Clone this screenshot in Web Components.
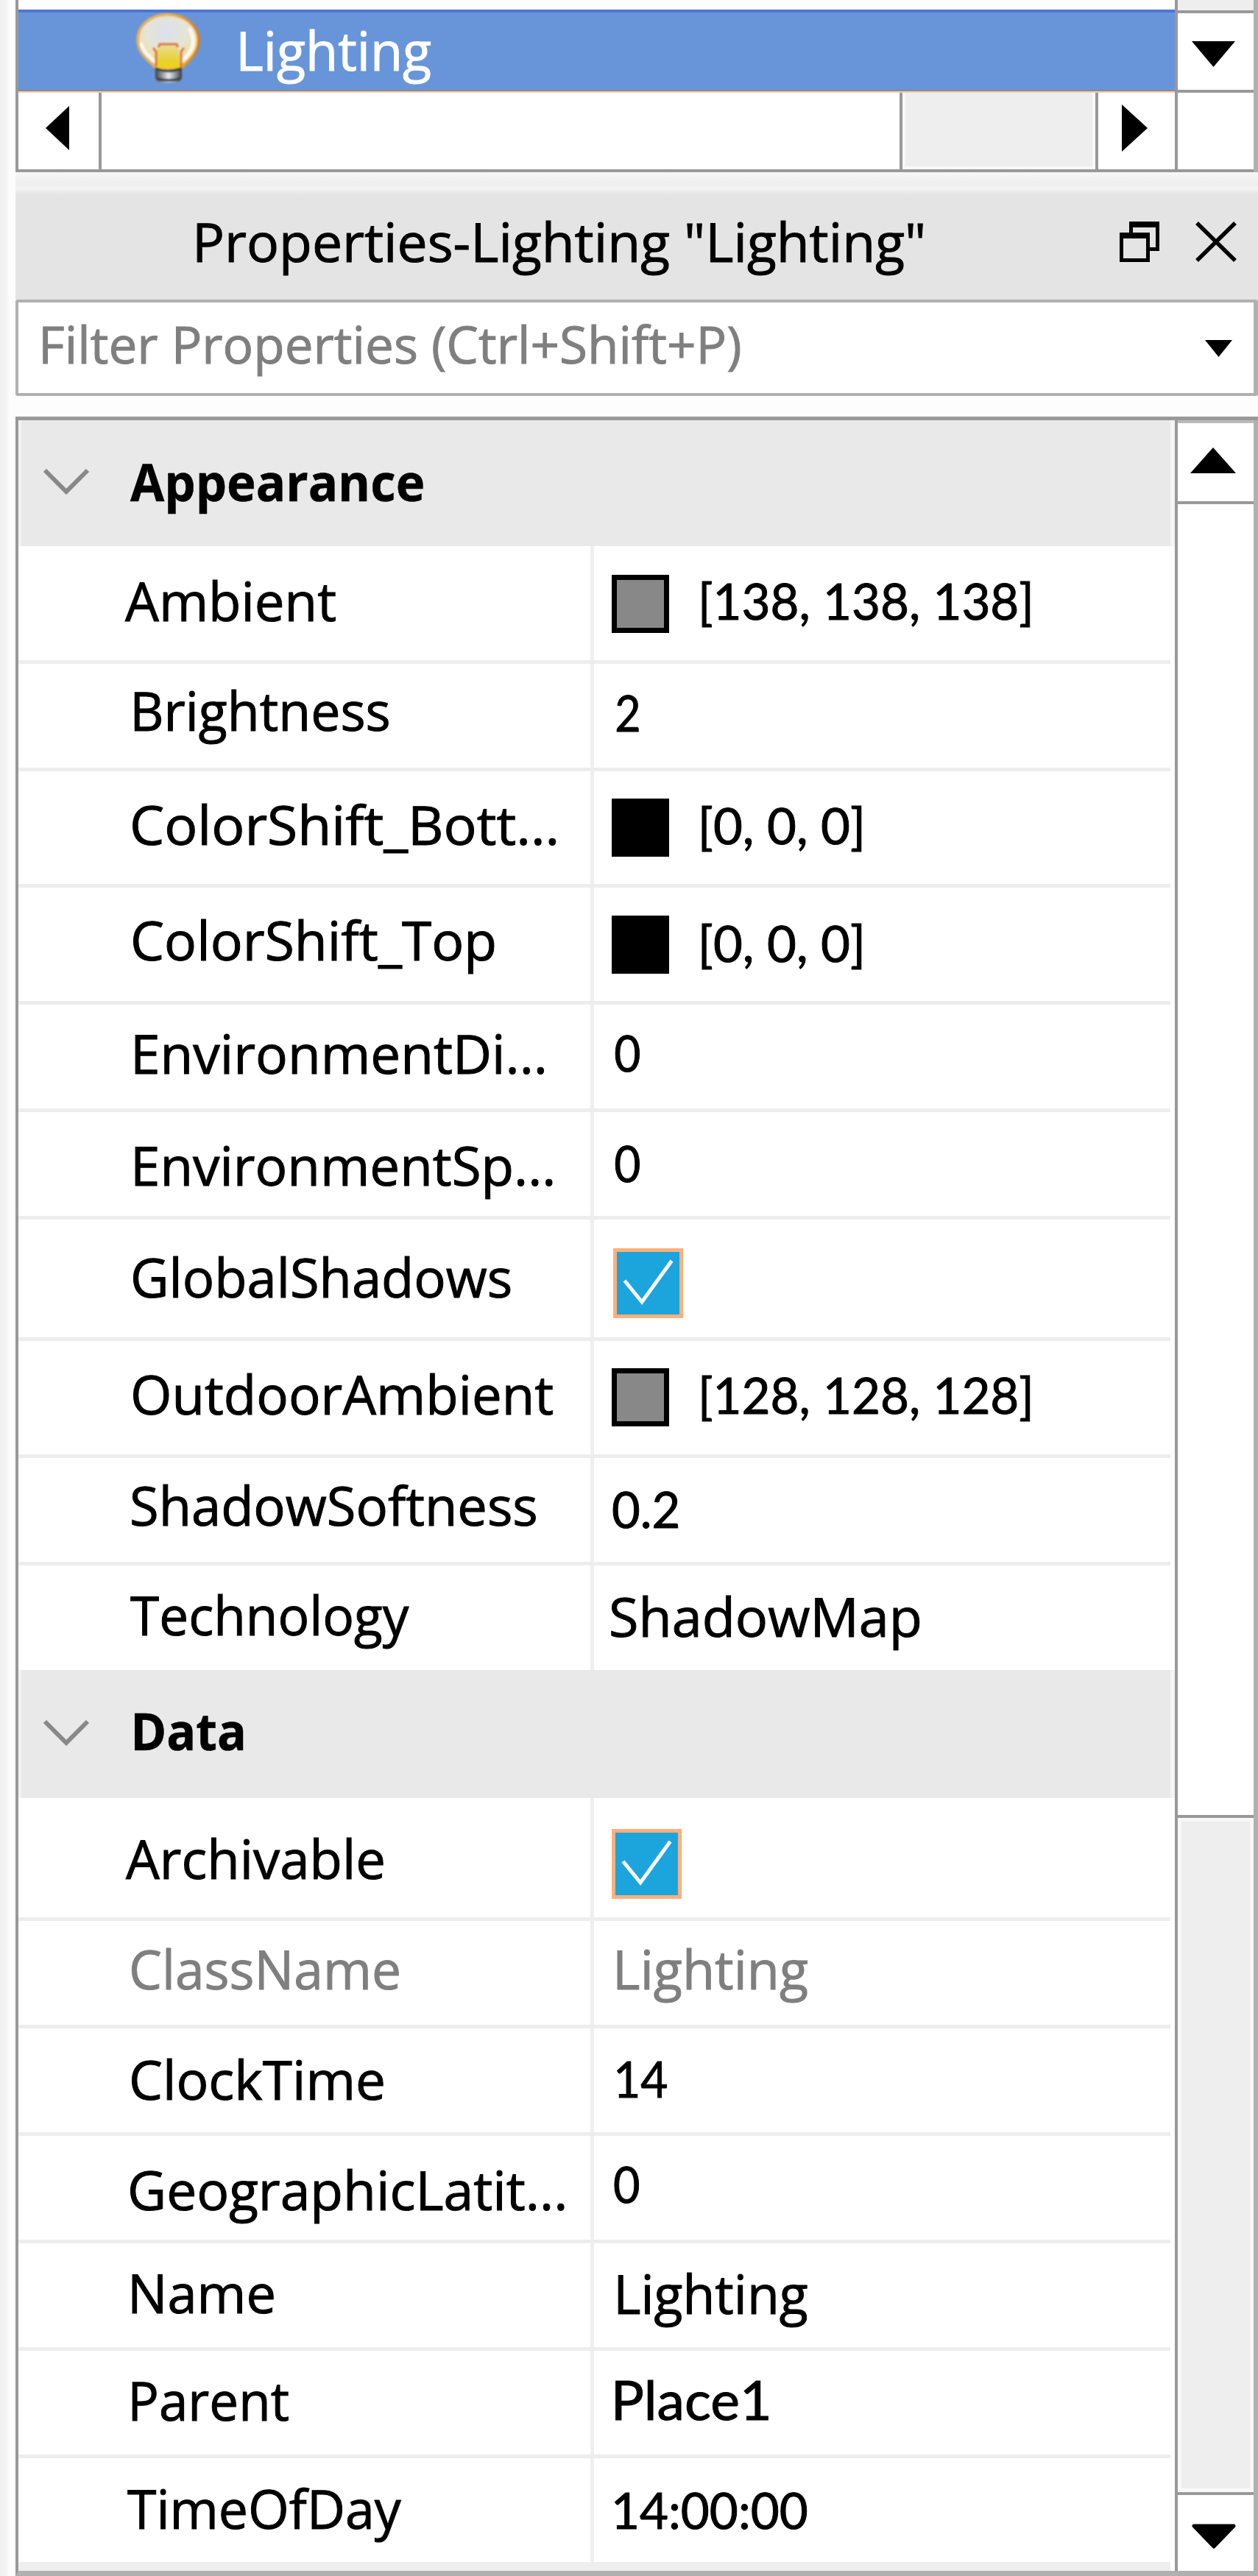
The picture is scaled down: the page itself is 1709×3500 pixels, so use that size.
<!DOCTYPE html>
<html lang="en">
<head>
<meta charset="utf-8">
<title>Properties - Lighting</title>
<style>
html, body { margin: 0; padding: 0; background: #fdfdfd; }
body { font-family: "Open Sans", "Noto Sans", sans-serif; color: #000; width: 1709px; height: 3500px; overflow: hidden; }
</style>
</head>
<body>
<studio-panel></studio-panel>
<script>
const define = (name, html, setup) => {
  const template = document.createElement('template');
  template.innerHTML = html;
  customElements.define(name, class extends HTMLElement {
    connectedCallback() {
      if (this.shadowRoot) return;
      const root = this.attachShadow({ mode: 'open' });
      root.appendChild(template.content.cloneNode(true));
      if (setup) setup(this, root);
    }
  });
};

/* Text whose drawn width is `w`, with its baseline `b` px below the top of its row. */
const pen = document.createElement('canvas').getContext('2d');
define('fit-text', `<style>
  :host { display: block; flex: none; align-self: flex-start; height: 100px; line-height: 100px; white-space: pre; }
  span { display: block; width: max-content; transform-origin: 0 0; -webkit-text-stroke: var(--thick, 1px) currentColor; }
</style><span></span>`, (el, root) => {
  const span = root.querySelector('span');
  const text = el.getAttribute('text');
  const size = +el.getAttribute('size') || 73;
  const weight = el.getAttribute('weight') || 400;
  const w = +el.getAttribute('w');
  const family = /\d/.test(text) ? 'Lato, sans-serif' : '"Open Sans", "Noto Sans", sans-serif';
  span.textContent = text;
  el.style.fontFamily = family;
  el.style.fontSize = size + 'px';
  el.style.fontWeight = weight;
  pen.font = `${weight} ${size}px ${family}`;
  const m = pen.measureText(text);
  const k = w / (m.actualBoundingBoxRight + m.actualBoundingBoxLeft);
  el.style.width = w + 'px';
  el.style.marginTop = (+el.getAttribute('b') - 50 - .388 * size) + 'px';
  span.style.transform = `translateX(${m.actualBoundingBoxLeft * k}px) scaleX(${k})`;
});

define('tri-arrow', `<style>:host{display:block;flex:none} svg{display:block}</style><svg><polygon/></svg>`, (el, root) => {
  const w = +el.getAttribute('w'), h = +el.getAttribute('h');
  const svg = root.querySelector('svg');
  svg.setAttribute('width', w); svg.setAttribute('height', h);
  root.querySelector('polygon').setAttribute('points', {
    down: `0,0 ${w},0 ${w / 2},${h}`, up: `0,${h} ${w},${h} ${w / 2},0`,
    left: `${w},0 ${w},${h} 0,${h / 2}`, right: `0,0 0,${h} ${w},${h / 2}`
  }[el.getAttribute('dir')]);
});

define('light-bulb', `<style>:host{display:block;flex:none} svg{display:block}</style>
<svg width="90" height="98" viewBox="0 0 90 98">
  <defs>
    <radialGradient id="glass" cx=".46" cy=".3" r=".72">
      <stop offset="0" stop-color="#dbe1f0"/><stop offset=".5" stop-color="#e6e4d2"/>
      <stop offset=".8" stop-color="#efe08c"/><stop offset="1" stop-color="#f0b437"/>
    </radialGradient>
    <linearGradient id="rim" x1="0" x2="1"><stop offset="0" stop-color="#e3ad68"/><stop offset=".5" stop-color="#efb84c"/><stop offset="1" stop-color="#d87d16"/></linearGradient>
    <linearGradient id="cap" x1="0" x2="1"><stop offset="0" stop-color="#444"/><stop offset=".25" stop-color="#8f949c"/><stop offset=".5" stop-color="#e4ebf8"/><stop offset=".75" stop-color="#969ba5"/><stop offset="1" stop-color="#333a44"/></linearGradient>
    <linearGradient id="glow" x1="0" x2="0" y1="0" y2="1"><stop offset="0" stop-color="#ecdc90"/><stop offset=".6" stop-color="#e5d33c"/><stop offset="1" stop-color="#efd20c"/></linearGradient>
    <filter id="soft"><feGaussianBlur stdDeviation="1.1"/></filter>
  </defs>
  <g filter="url(#soft)">
  <path d="M44 3C68 3 86 18 86 38C86 54 74 65 64 74C61 77 57 78 44 78C31 78 29 76 26 73C15 63 3 53 3 37C3 17 21 3 44 3Z" fill="url(#glass)" stroke="url(#rim)" stroke-width="4"/>
  <path d="M74 23C84 43 75 57 61 67M8 43C11 56 22 62 29 69" fill="none" stroke="#fbf7f4" stroke-width="5" stroke-linecap="round"/>
  <path d="M30 45L58 45L61 75L28 75Z" fill="url(#glow)"/>
  <path d="M28 73L28 53L24 48M62 73L62 53L66 48M31 47L33 43H56L58 47" fill="none" stroke="#d96f2b" stroke-width="3"/>
  <path d="M27 74Q44 82 63 74V89Q60 95 54 95H36Q30 95 27 89Z" fill="url(#cap)"/>
  <path d="M27 76Q44 83 63 76M29 90Q45 94 61 90" fill="none" stroke="#43413c" stroke-width="3.5"/>
  </g>
</svg>`);

define('color-swatch', `<style>:host{display:block;flex:none;box-sizing:border-box;width:78px;height:79px;border:7px solid #000;background:var(--c)}</style>`,
  el => el.style.setProperty('--c', el.getAttribute('color')));

define('check-box', `<style>:host{display:block;flex:none;box-sizing:border-box;width:95px;height:95px;border:5px solid #ffb07c;background:#1ba5dc} svg{display:block}</style>
<svg width="85" height="85" viewBox="5 5 85 85"><path d="M15.5 44L39 73L79.500 17" fill="none" stroke="#fff" stroke-width="5"/></svg>`);

define('tree-view', `<style>
  :host { display: grid; grid-template-columns: 1571px 1fr; height: 234px; box-sizing: border-box; border-left: 4px solid #999; margin-left: 21px; }
  .main { display: flex; flex-direction: column; background: #fff; }
  .row { display: flex; margin-top: 13px; height: 109px; box-sizing: border-box; border-top: 4px solid #4c76d8; background: #6895d9; color: #fff; }
  .row light-bulb { margin: 0 0 0 159px; }
  .row fit-text { margin-left: 53px; }
  .line { height: 4px; background: linear-gradient(#8d8b8b 50%, #f3cdb8 50%); }
  .hbar { display: grid; grid-template-columns: 109px 4px 1084px 4px 262px 4px 1fr; height: 104px; }
  .hbar i { background: #999; }
  .hbar .track { background: #eee; border: 4px solid #f8f8f8; border-top-width: 0; }
  .base { height: 4px; background: #999; }
  .side { display: grid; grid-template-rows: 14px 4px 104px 4px 104px 4px; border-left: 4px solid #999; border-right: 6px solid #b0b0b0; background: #fff; }
  .side b { background: #999; } .side .t { background: #eee; }
  .side tri-arrow { margin: 38px 0 0 19px; }
  .la { margin: 18px 0 0 37px; } .ra { margin: 16px 0 0 32px; }
</style>
<div class="main">
  <div class="row"><light-bulb></light-bulb><fit-text text="Lighting" w="258" b="79.500" size="74"></fit-text></div>
  <div class="line"></div>
  <div class="hbar"><tri-arrow class="la" dir="left" w="32" h="60"></tri-arrow><i></i><span></span><i></i><span class="track"></span><i></i><tri-arrow class="ra" dir="right" w="35" h="64"></tri-arrow></div>
  <div class="base"></div>
</div>
<div class="side"><span class="t"></span><b></b><tri-arrow dir="down" w="59" h="35"></tri-arrow><b></b><span></span><b></b></div>`);

define('title-bar', `<style>
  :host { display: flex; height: 173px; margin-left: 21px; background: linear-gradient(#f7f7f7 0, #eee 14px, #f3f3f3 22px, #e4e4e4 31px); }
  fit-text { margin-left: 247px; }
  .restore { margin: 67px 0 0 267px; } .close { margin: 67px 0 0 49px; }
  svg { display: block; flex: none; }
</style>
<fit-text text='Properties-Lighting "Lighting"' w="986" b="122"></fit-text>
<svg class="restore" width="54" height="55"><path fill-rule="evenodd" d="M13 0H54V40H41V35H49V8H18V15H13Z M0 15H41V55H0Z M5 23V50H36V23Z"/></svg>
<svg class="close" width="56" height="55"><path d="M2 2L54 53M54 2L2 53" stroke="#000" stroke-width="5.500"/></svg>`);

define('filter-box', `<style>
  :host { display: flex; box-sizing: border-box; height: 131px; margin-left: 21px; border: 4px solid #b0b0b0; border-right-width: 6px; border-radius: 3px; background: #fff; color: #7f7f7f; }
  fit-text { margin-left: 33px; }
  tri-arrow { margin: 51px 0 0 632px; color: #000; }
</style>
<fit-text text="Filter Properties (Ctrl+Shift+P)" w="947" b="83" size="70"></fit-text>
<tri-arrow dir="down" w="37" h="23"></tri-arrow>`);

define('section-head', `<style>
  :host { display: flex; box-sizing: border-box; background: #e9e9e9; border-left: 4px solid #f2f2f2; border-right: 6px solid #f4f4f4; }
  svg { display: block; flex: none; }
</style><svg width="64" height="37"><path d="M3 3L32 32L61 3" fill="none" stroke="#888" stroke-width="6"/></svg><fit-text></fit-text>`, (el, root) => {
  const [text, left, w, b, chevron] = el.data;
  root.querySelector('svg').style.margin = `${chevron}px 0 0 29px`;
  const t = root.querySelector('fit-text').cloneNode();
  for (const [k, v] of Object.entries({ text, w, b, size: 70, weight: 700 })) t.setAttribute(k, v);
  t.style.setProperty('--thick', '.5px');
  t.style.marginLeft = (left - 122) + 'px';
  root.querySelector('fit-text').replaceWith(t);
});

define('property-row', `<style>
  :host { display: grid; grid-template-columns: 777px 5px 1fr; box-sizing: border-box; border-bottom: 5px solid #ededed; }
  :host(.end) { border-bottom: 0; }
  :host(.last) { border-bottom: 12px solid #eee; }
  div { display: flex; } i { background: #efefef; }
</style><div class="name"></div><i></i><div class="value"></div>`, (el, root) => {
  const { name, value, top, grey } = el.data;
  if (grey) el.style.color = '#7f7f7f';
  const label = ([text, left, right, base], origin, size) => {
    const t = document.createElement('fit-text');
    for (const [k, v] of Object.entries({ text, w: right - left, b: base - top, size })) t.setAttribute(k, v);
    t.style.marginLeft = (left - origin) + 'px';
    return t;
  };
  root.querySelector('.name').append(label(name, 25, 73));
  const cell = root.querySelector('.value');
  if (value.check) {
    const c = document.createElement('check-box');
    c.style.margin = `${value.check[1] - top}px 0 0 ${value.check[0] - 807}px`;
    cell.append(c);
    return;
  }
  let origin = 807;
  if (value.swatch) {
    const s = document.createElement('color-swatch');
    s.setAttribute('color', value.swatch[0]);
    s.style.margin = `${value.swatch[1] - top}px 0 0 24px`;
    cell.append(s);
    origin = 909;
  }
  cell.append(label(value.text, origin, /^[A-Z]/.test(value.text[0]) ? 73 : 67));
});

define('scroll-bar', `<style>
  :host { display: grid; grid-template-rows: 4px 106px 4px 1781px 4px 916px 4px 1fr; border-left: 4px solid #999; border-right: 6px solid #b0b0b0; background: #fff; }
  i { background: #999; } i:first-of-type { background: #bbb; }
  .track { background: #eee; border: 5px solid #f8f8f8; }
  .up { margin: 33px 0 0 17px; }
  svg { display: block; margin: 39px 0 0 19px; }
</style><i></i><tri-arrow class="up" dir="up" w="62" h="35"></tri-arrow><i></i><span></span><i></i><span class="track"></span><i></i>
<svg width="61" height="35"><path d="M3 3H57L30 31Z" stroke="#000" stroke-width="5" stroke-linejoin="round"/></svg>`);

const rows = [
  { h: 171, head: ['Appearance', 176.6, 398, 110, 64.5] },
  { h: 160, name: ['Ambient', 170, 456, 844.5], value: { swatch: ['#888', 781], text: ['[138, 138, 138]', 953.6, 1399, 842] } },
  { h: 146, name: ['Brightness', 182.700, 527.7, 993], value: { text: ['2', 838, 868, 994] } },
  { h: 158, name: ['ColorShift_Bott...', 180, 755, 1148.5], value: { swatch: ['#000', 1085], text: ['[0, 0, 0]', 953.6, 1170, 1146.5] } },
  { h: 159, name: ['ColorShift_Top', 180.5, 671, 1305], value: { swatch: ['#000', 1244], text: ['[0, 0, 0]', 953.6, 1170, 1307] } },
  { h: 146, name: ['EnvironmentDi...', 183.7, 738.5, 1459.5], value: { text: ['0', 836, 868.6, 1455.5] } },
  { h: 146, name: ['EnvironmentSp...', 183.7, 750, 1611], value: { text: ['0', 836, 868.6, 1605.5] } },
  { h: 165, name: ['GlobalShadows', 180.5, 693, 1763.5], value: { check: [833, 1696] } },
  { h: 159, name: ['OutdoorAmbient', 180.5, 750.6, 1922], value: { swatch: ['#888', 1859], text: ['[128, 128, 128]', 953.6, 1399, 1921] } },
  { h: 146, name: ['ShadowSoftness', 179, 728, 2073.5], value: { text: ['0.2', 833, 921.5, 2076] } },
  { h: 142, end: 1, name: ['Technology', 177.300, 556, 2222.5], value: { text: ['ShadowMap', 829.7, 1249, 2224] } },
  { h: 174, head: ['Data', 183, 148, 109, 67] },
  { h: 167, name: ['Archivable', 171, 521, 2553.5], value: { check: [831, 2485] } },
  { h: 146, grey: 1, name: ['ClassName', 179, 542, 2703], value: { text: ['Lighting', 838.6, 1097, 2703] } },
  { h: 146, name: ['ClockTime', 179, 521, 2853.5], value: { text: ['14', 838, 905.6, 2850] } },
  { h: 146, name: ['GeographicLatit...', 176.8, 766, 3003], value: { text: ['0', 834.7, 867.6, 2992.5] } },
  { h: 146, name: ['Name', 180, 372, 3143], value: { text: ['Lighting', 840, 1097, 3144] } },
  { h: 146, name: ['Parent', 180, 392, 3289], value: { text: ['Place1', 835.5, 1043.6, 3288] } },
  { h: 153, last: 1, name: ['TimeOfDay', 173, 545, 3436], value: { text: ['14:00:00', 834.7, 1095.6, 3436] } }
];

define('property-grid', `<style>
  :host { display: grid; grid-template-columns: 1571px 1fr; box-sizing: border-box; height: 2934px; margin: 28px 0 0 21px; border-top: 5px solid #999; border-left: 4px solid #999; border-bottom: 7px solid #b0b0b0; background: #fff; }
  .list { display: flex; flex-direction: column; }
  .list > * { flex: none; }
  property-row { margin-right: 6px; }
</style><div class="list"></div><scroll-bar></scroll-bar>`, (el, root) => {
  const list = root.querySelector('.list');
  let top = 571;
  for (const r of rows) {
    const item = document.createElement(r.head ? 'section-head' : 'property-row');
    item.data = r.head || { ...r, top };
    item.style.height = r.h + 'px';
    if (r.end) item.classList.add('end');
    if (r.last) item.classList.add('last');
    list.append(item);
    top += r.h;
  }
});

define('studio-panel', `<style>
  :host { display: flow-root; box-sizing: border-box; width: 1709px; height: 3500px; background: linear-gradient(90deg, #f1f1f1 0, #f3f3f3 8px, #fdfdfd 13px, #fdfdfd); }
</style><tree-view></tree-view><title-bar></title-bar><filter-box></filter-box><property-grid></property-grid>`);
</script>
</body>
</html>
